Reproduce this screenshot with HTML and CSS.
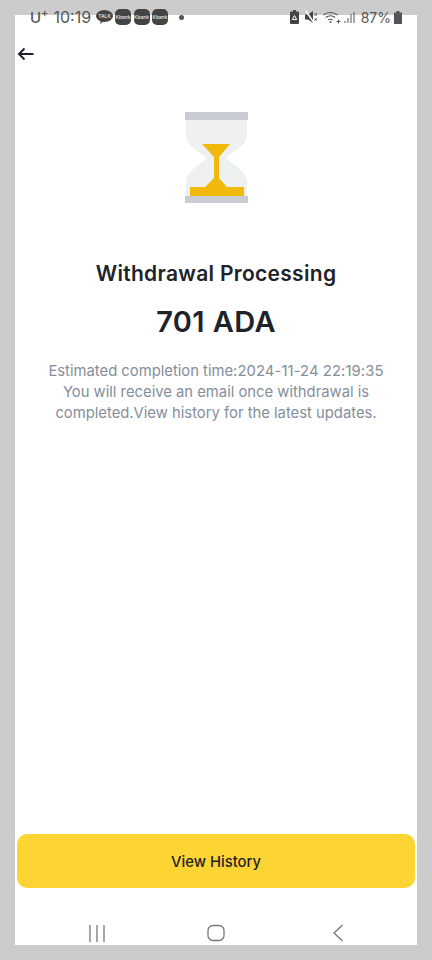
FILE: index.html
```html
<!DOCTYPE html>
<html lang="en">
<head>
  <meta charset="UTF-8" />
  <title>Withdrawal Processing</title>
  <link rel="stylesheet" href="styles.css">
</head>
<body>
  <div class="screen">
    <div class="status-bar">
      <div class="status-left">
        <span class="carrier">U<sup>+</sup></span>
        <span class="clock">10:19</span>
        <span class="talk-wrap">
          <svg class="talk" width="17" height="14" viewBox="0 0 17 14"><ellipse cx="8.500" cy="6" rx="8.500" ry="6" fill="#444"/><path d="M5 10l-1 4 4-3z" fill="#444"/></svg>
          <span class="talk-label">TALK</span>
        </span>
        <span class="bank">Kbank</span>
        <span class="bank">Kbank</span>
        <span class="bank">Kbank</span>
        <span class="dot"></span>
      </div>
      <div class="status-right">
        <svg width="9" height="14" viewBox="0 0 9 14"><path d="M3 0h3v1.500h2a1 1 0 0 1 1 1V13a1 1 0 0 1-1 1H1a1 1 0 0 1-1-1V2.500a1 1 0 0 1 1-1h2z" fill="#444"/><path d="M4.500 5.500l2.200 4h-4.400z" fill="none" stroke="#fff" stroke-width="1"/></svg>
        <svg class="mute" width="12" height="14" viewBox="0 0 12 14"><path d="M0 4.500h3L8 1v12L3 9.500H0z" fill="#444"/><path d="M1 1l8 12" stroke="#fff" stroke-width="1.500"/><path d="M9.500 3.500l2.500 2M12 3.500l-2.500 2M9.500 8.500l2.500 2M12 8.500l-2.500 2" stroke="#555" stroke-width="1"/></svg>
        <svg class="wifi" width="18" height="14" viewBox="0 0 18 14"><g fill="none" stroke="#555" stroke-width="1.100"><path d="M0.500 5a11 11 0 0 1 14 0"/><path d="M2.800 7.500a7.500 7.500 0 0 1 9.400 0"/><path d="M5.200 10a4 4 0 0 1 4.600 0"/></g><circle cx="7.500" cy="12" r="1" fill="#555"/><path d="M15.500 9.500v4M13.500 11.500h4" stroke="#555" stroke-width="1"/></svg>
        <svg class="signal" width="11" height="14" viewBox="0 0 11 14"><path d="M1 11v2M4 8v5M7 4v9M10 2v11" stroke="#555" stroke-width="1"/></svg>
        <span class="battery-text">87%</span>
        <svg width="8" height="13" viewBox="0 0 8 13"><path d="M2.500 0h3v1.500H8V13H0V1.500h2.500z" fill="#555"/></svg>
      </div>
    </div>

    <div class="nav">
      <svg class="back" width="17" height="14" viewBox="0 0 17 14"><path d="M16.500 7H2M7.500 1.500L2 7l5.500 5.500" fill="none" stroke="#1e2329" stroke-width="2"/></svg>
    </div>

    <div class="content">
      <svg class="hourglass" width="63" height="91" viewBox="0 0 63 91">
        <path d="M1 8h61v14C62 34 50 38 41 46c9 8 21 14 21 24v14H1V70c0-10 12-16 21-24C13 38 1 34 1 22z" fill="#eff0f2"/>
        <path d="M17 32h28L34 45v21l8 9h17v9H5v-9h15l9-9V45z" fill="#f0b90b"/>
        <rect x="0" y="0" width="63" height="8" fill="#c9ccd2"/>
        <rect x="0" y="84" width="63" height="7" fill="#c9ccd2"/>
      </svg>
      <h1 class="title">Withdrawal Processing</h1>
      <div class="amount">701 ADA</div>
      <p class="note">Estimated completion time:<span class="time">2024-11-24 22:19:35</span><br>You will receive an email once withdrawal is completed.View history for the latest updates.</p>
    </div>

    <div class="actions">
      <button class="btn">View History</button>
    </div>

    <div class="soft-keys">
      <svg width="18" height="18" viewBox="0 0 18 18"><path d="M2 1v17M9 1v17M16 1v17" stroke="#777" stroke-width="1.300"/></svg>
      <svg width="18" height="18" viewBox="0 0 18 18"><rect x="1" y="1.500" width="16" height="15" rx="5" fill="none" stroke="#777" stroke-width="1.300"/></svg>
      <svg width="18" height="18" viewBox="-6 0 18 18"><path d="M10.500 1L2 9l8.500 8" fill="none" stroke="#777" stroke-width="1.300"/></svg>
    </div>
  </div>
</body>
</html>
```

FILE: styles.css
```css
html, body {
  margin: 0;
  padding: 0;
  height: 100%;
}

body {
  background-color: #cccccc;
  font-family: "Inter", "Liberation Sans", sans-serif;
  overflow: hidden;
  padding: 15px;
  box-sizing: border-box;
}

.screen {
  background-color: #ffffff;
  height: 930px;
  display: flex;
  flex-direction: column;
}

.status-bar {
  margin-top: -8px;
  height: 20px;
  display: flex;
  justify-content: space-between;
  align-items: center;
  padding: 0 15px;
  color: #555;
  font-size: 15px;
}

.status-left, .status-right {
  display: flex;
  align-items: center;
}

.carrier {
  font-weight: 500;
  margin-right: 5px;
}

.carrier sup {
  font-size: 11px;
  line-height: 0;
}

.clock {
  font-size: 16px;
  margin-right: 5px;
}

.talk-wrap {
  position: relative;
  display: flex;
  margin-right: 2px;
}

.talk-label {
  position: absolute;
  top: 3px;
  left: 0;
  width: 17px;
  color: #fff;
  font-size: 5px;
  line-height: 6px;
  text-align: center;
}

.bank {
  width: 16px;
  height: 16px;
  margin-right: 2.500px;
  border-radius: 5px;
  background-color: #444;
  color: #fff;
  font-size: 5px;
  line-height: 16px;
  text-align: center;
  overflow: hidden;
}

.dot {
  width: 5px;
  height: 5px;
  margin-left: 8px;
  border-radius: 50%;
  background-color: #555;
}

.status-right svg {
  margin-right: 6px;
}

.status-right .wifi {
  margin-right: 3px;
}

.status-right svg:last-child {
  margin-right: 0;
}

.battery-text {
  font-size: 14px;
  margin-right: 3px;
}

.nav {
  height: 40px;
  padding: 5px 0 0 2px;
  box-sizing: border-box;
}

.back {
  display: block;
  margin-top: 15px;
}

.content {
  flex: 1;
  display: flex;
  flex-direction: column;
  align-items: center;
  padding-top: 45px;
  text-align: center;
}

.hourglass {
  display: block;
}

.title {
  margin: 57px 0 0;
  font-size: 21px;
  letter-spacing: 0.3px;
  line-height: 28px;
  font-weight: 600;
  color: #1e2329;
}

.amount {
  margin-top: 16px;
  font-size: 29px;
  letter-spacing: 0.4px;
  line-height: 36px;
  font-weight: 600;
  color: #1e2329;
}

.note {
  margin: 21px 0 0;
  width: 360px;
  font-size: 14.800px;
  line-height: 21px;
  color: #848e9c;
}

.time {
  letter-spacing: 0.1px;
}

.actions {
  margin-top: -1px;
  padding: 0 2px;
}

.btn {
  display: block;
  width: 100%;
  height: 54px;
  padding-top: 3px;
  border: none;
  border-radius: 10px;
  background-color: #fcd535;
  color: #1e2329;
  font-family: inherit;
  font-size: 14.800px;
  font-weight: 500;
}

.soft-keys {
  height: 57px;
  display: flex;
  justify-content: space-between;
  align-items: center;
  padding: 32px 73px 0;
  box-sizing: border-box;
}
```
